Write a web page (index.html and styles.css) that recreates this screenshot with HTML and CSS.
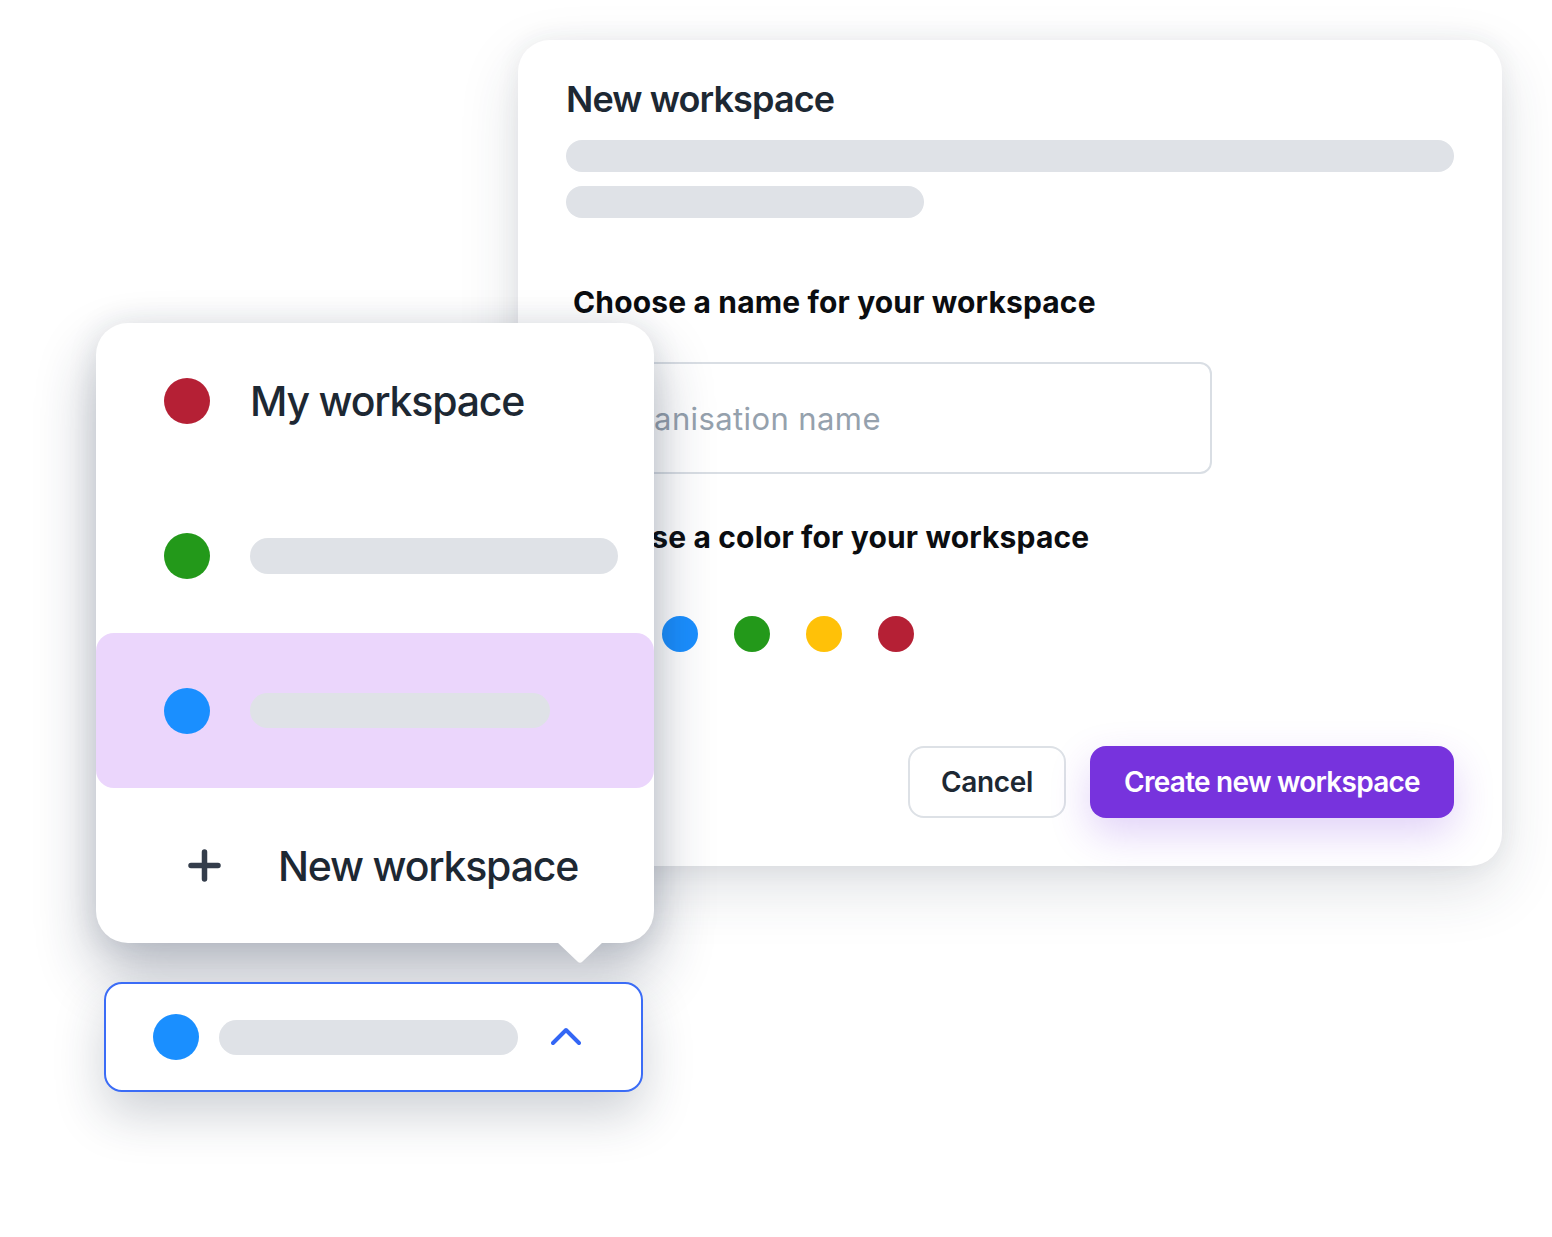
FILE: index.html
```html
<!DOCTYPE html>
<html lang="en">
<head>
<meta charset="utf-8">
<title>New workspace</title>
<link rel="stylesheet" href="styles.css">
</head>
<body>
<div class="stage">
  <section class="dialog">
    <h1 class="dlg-title">New workspace</h1>
    <div class="skel-lines">
      <div class="skel skel-long"></div>
      <div class="skel skel-short"></div>
    </div>
    <h2 class="field-label">Choose a name for your workspace</h2>
    <div class="input">Organisation name</div>
    <h2 class="field-label label-color">Choose a color for your workspace</h2>
    <div class="swatches">
      <span class="dot dot-sm purple"></span>
      <span class="dot dot-sm blue"></span>
      <span class="dot dot-sm green"></span>
      <span class="dot dot-sm yellow"></span>
      <span class="dot dot-sm red"></span>
    </div>
    <div class="actions">
      <button class="btn btn-cancel">Cancel</button>
      <button class="btn btn-primary">Create new workspace</button>
    </div>
  </section>

  <div class="menu">
    <div class="row">
      <span class="dot dot-lg red"></span>
      <span class="row-text">My workspace</span>
    </div>
    <div class="row">
      <span class="dot dot-lg green"></span>
      <span class="skel skel-row2"></span>
    </div>
    <div class="row row-active">
      <span class="dot dot-lg blue"></span>
      <span class="skel skel-row3"></span>
    </div>
    <div class="row row-new">
      <svg class="plus" width="33" height="33" viewBox="0 0 33 33"><path d="M16.5 3v27M3 16.5h27" stroke="#343d4b" stroke-width="5.5" stroke-linecap="round" fill="none"/></svg>
      <span class="row-text">New workspace</span>
    </div>
    <svg class="pointer" width="46" height="22" viewBox="0 0 46 22"><path d="M0 0H46L25.5 19.5Q23 22 20.5 19.5Z" fill="#fff"/></svg>
  </div>

  <div class="selector">
    <span class="dot dot-lg blue"></span>
    <span class="skel skel-sel"></span>
    <svg class="chev" width="30" height="20" viewBox="0 0 30 20"><path d="M2 16L15 3L28 16" stroke="#3366f5" stroke-width="4" stroke-linecap="round" stroke-linejoin="round" fill="none"/></svg>
  </div>
</div>
</body>
</html>
```

FILE: styles.css
```css
* { box-sizing: border-box; }
html, body { margin: 0; padding: 0; background: #ffffff; }
body { font-family: Inter, "Noto Sans", "Liberation Sans", sans-serif; }

.stage {
  position: relative;
  width: 1552px;
  height: 1237px;
  overflow: hidden;
  background: #ffffff;
}

/* ---------- dialog ---------- */
.dialog {
  position: absolute;
  left: 518px;
  top: 40px;
  width: 984px;
  height: 826px;
  padding: 37px 48px 48px 48px;
  background: #ffffff;
  border-radius: 32px;
  box-shadow: 0 22px 60px rgba(40, 52, 72, 0.15), 0 0 24px rgba(40, 52, 72, 0.07);
  display: flex;
  flex-direction: column;
}
.dlg-title {
  margin: 0;
  font-size: 36px;
  line-height: 44px;
  font-weight: 600;
  color: #1d2833;
  letter-spacing: -0.9px;
}
.skel-lines {
  margin-top: 19px;
  display: flex;
  flex-direction: column;
  gap: 14px;
}
.skel { display: block; background: #dfe2e7; }
.skel-long { width: 888px; height: 32px; border-radius: 16px; }
.skel-short { width: 358px; height: 32px; border-radius: 16px; }

.field-label {
  margin: 66px 0 0 7px;
  font-size: 30px;
  line-height: 36px;
  font-weight: 700;
  color: #0b0d10;
  letter-spacing: 0.15px;
}
.label-color { margin-top: 45px; }

.input {
  margin-top: 42px;
  width: 646px;
  height: 112px;
  border: 2px solid #d9dee4;
  border-radius: 12px;
  padding-left: 31px;
  display: flex;
  align-items: center;
  font-size: 31px;
  font-weight: 400;
  color: #95a1ad;
  letter-spacing: 0.4px;
}

.swatches {
  margin: 61px 0 0 24px;
  display: flex;
  gap: 36px;
}
.dot { display: block; border-radius: 50%; flex: none; }
.dot-sm { width: 36px; height: 36px; }
.dot-lg { width: 46px; height: 46px; }
.purple { background: #7733dd; }
.blue { background: #1a8fff; }
.green { background: #23991a; }
.yellow { background: #ffc108; }
.red { background: #b52035; }

.actions {
  margin-top: 94px;
  display: flex;
  justify-content: flex-end;
  gap: 24px;
}
.btn {
  height: 72px;
  border-radius: 16px;
  font-family: Inter, "Noto Sans", "Liberation Sans", sans-serif;
  font-size: 28px;
  font-weight: 600;
  letter-spacing: -0.3px;
  cursor: pointer;
}
.btn-cancel {
  width: 158px;
  background: #ffffff;
  border: 2px solid #dde1e6;
  color: #1d2833;
}
.btn-primary {
  width: 364px;
  background: #7733dd;
  border: none;
  color: #ffffff;
  letter-spacing: -0.75px;
  box-shadow: 0 16px 40px rgba(119, 51, 221, 0.22);
}

/* ---------- dropdown menu ---------- */
.menu {
  position: absolute;
  left: 96px;
  top: 323px;
  width: 558px;
  height: 620px;
  background: #ffffff;
  border-radius: 32px;
  box-shadow: 0 30px 60px rgba(30, 45, 70, 0.32), 0 0 30px rgba(30, 45, 70, 0.1);
  display: flex;
  flex-direction: column;
}
.row {
  height: 155px;
  display: flex;
  align-items: center;
  padding-left: 68px;
  gap: 40px;
  flex: none;
}
.row-active {
  background: #ebd6fc;
  border-radius: 18px;
}
.row-text {
  font-size: 41px;
  font-weight: 500;
  color: #1d2833;
  letter-spacing: -1.2px;
}
.row-new { padding-left: 92px; gap: 57px; }
.plus { display: block; flex: none; }
.skel-row2 { width: 368px; height: 36px; border-radius: 18px; }
.skel-row3 { width: 300px; height: 35px; border-radius: 18px; }
.pointer {
  position: absolute;
  left: 461px;
  top: 619px;
  display: block;
}

/* ---------- selector ---------- */
.selector {
  position: absolute;
  left: 104px;
  top: 982px;
  width: 539px;
  height: 110px;
  border: 2px solid #3b6cf6;
  border-radius: 18px;
  background: #ffffff;
  box-shadow: 0 22px 50px rgba(30, 45, 70, 0.22);
  display: flex;
  align-items: center;
  padding-left: 47px;
  gap: 20px;
}
.skel-sel { width: 299px; height: 35px; border-radius: 18px; }
.chev { display: block; margin-left: 13px; }
```
